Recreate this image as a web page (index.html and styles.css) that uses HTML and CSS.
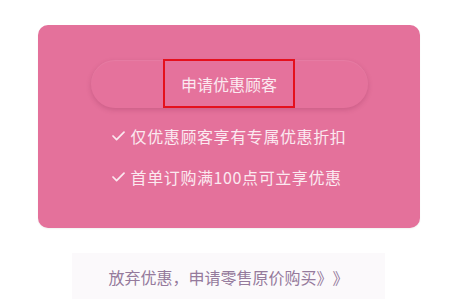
FILE: index.html
```html
<!DOCTYPE html>
<html lang="zh-CN">
<head>
<meta charset="utf-8">
<link rel="stylesheet" href="styles.css">
</head>
<body>
<div class="page">
  <section class="card">
    <div class="pill"><span class="hl">申请优惠顾客</span></div>
    <ul class="perks">
      <li><svg class="check" width="13" height="10" viewBox="0 0 13 10"><polyline points="1,5 4.6,8.6 12,1.2" fill="none" stroke="#fbe9f0" stroke-width="1.7" stroke-linecap="round" stroke-linejoin="round"/></svg>仅优惠顾客享有专属优惠折扣</li>
      <li><svg class="check" width="13" height="10" viewBox="0 0 13 10"><polyline points="1,5 4.6,8.6 12,1.2" fill="none" stroke="#fbe9f0" stroke-width="1.7" stroke-linecap="round" stroke-linejoin="round"/></svg>首单订购满100点可立享优惠</li>
    </ul>
  </section>
  <div class="alt">放弃优惠，申请零售原价购买》》</div>
</div>
</body>
</html>
```
FILE: styles.css
```css
html, body {
  margin: 0;
  padding: 0;
  background: #ffffff;
}
body {
  font-family: "Noto Sans CJK SC", "Noto Sans", sans-serif;
  text-spacing-trim: space-all;
}
.page {
  width: 467px;
  height: 299px;
  overflow: hidden;
  padding-top: 25px;
  box-sizing: border-box;
}
.card {
  margin-left: 38px;
  width: 382px;
  height: 203px;
  box-sizing: border-box;
  background: #e4719b;
  border-radius: 10px;
  padding-top: 35px;
  display: flex;
  flex-direction: column;
  align-items: center;
  box-shadow: 0 1px 2px rgba(0,0,0,0.06);
}
.pill {
  width: 277px;
  height: 48px;
  border-radius: 24px;
  background: #e5729c;
  box-shadow: 0 2px 5px rgba(120, 30, 70, 0.22), inset 0 1px 1px rgba(255,255,255,0.08);
  display: flex;
  justify-content: center;
  align-items: stretch;
}
.hl {
  display: flex;
  align-items: center;
  padding: 0 16px;
  margin-top: -1px;
  border: 2px solid #e5101d;
  color: #fbe9f0;
  font-size: 16px;
}
.perks {
  list-style: none;
  margin: 16px 0 0;
  padding: 0;
  display: flex;
  flex-direction: column;
  gap: 17px;
  color: #fbe9f0;
  font-size: 16px;
  line-height: 24px;
}
.perks li {
  display: flex;
  align-items: center;
  letter-spacing: 0.6px;
}
.check {
  margin-right: 6px;
  flex: none;
}
.alt {
  margin: 25px 0 0 72px;
  width: 313px;
  height: 60px;
  background: #fbf9fb;
  color: #957a9c;
  font-size: 16px;
  display: flex;
  justify-content: center;
  padding-top: 12px;
  box-sizing: border-box;
  line-height: 24px;
}
```
